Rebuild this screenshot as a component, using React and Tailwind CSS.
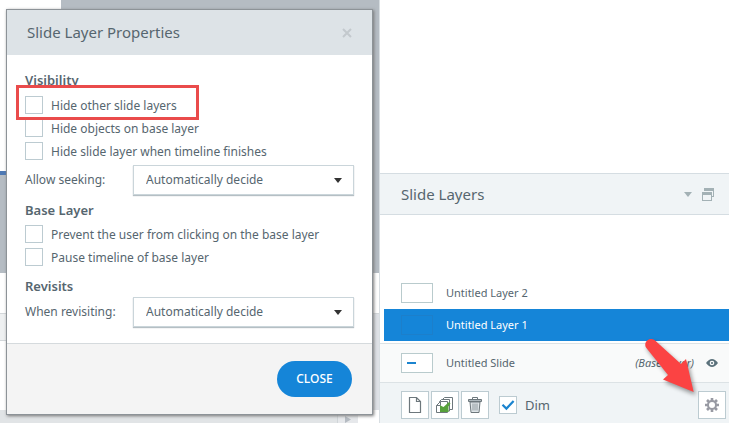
import React from "react";

const Checkbox = ({ id, label, checked = false }) => (
  <div className="flex h-[23px] items-center gap-2">
    <span className="relative flex">
      <input
        id={id}
        type="checkbox"
        defaultChecked={checked}
        className="peer h-[18px] w-[18px] appearance-none border border-[#bccbd1] bg-white"
      />
      <svg
        className="pointer-events-none absolute inset-0 hidden peer-checked:block"
        width="18"
        height="18"
        viewBox="0 0 18 18"
        fill="none"
        stroke="#1b84cf"
        strokeWidth="2.2"
        aria-hidden="true"
      >
        <path d="M3.5 8.8 7.4 12.6 14.6 5" />
      </svg>
    </span>
    <label htmlFor={id} className="pt-[2px]">
      {label}
    </label>
  </div>
);

const SelectRow = ({ id, label }) => (
  <div className="flex items-center">
    <label htmlFor={id} className="w-[108px] shrink-0">
      {label}
    </label>
    <div className="relative flex-1">
      <select
        id={id}
        className="h-[30px] w-full appearance-none border border-[#cad5da] bg-white px-3 shadow-[0_1px_1px_#b5bfc4]"
      >
        <option>Automatically decide</option>
        <option>Resume saved state</option>
        <option>Reset to initial state</option>
      </select>
      <svg
        className="pointer-events-none absolute top-[13px] right-3"
        width="8"
        height="5"
        viewBox="0 0 8 5"
        aria-hidden="true"
      >
        <path d="M0 0H8L4 5Z" fill="#333" />
      </svg>
    </div>
  </div>
);

const Heading = ({ children }) => (
  <h3 className="text-[13px] leading-5 font-semibold">{children}</h3>
);

const PropertiesDialog = () => (
  <div
    role="dialog"
    aria-labelledby="dialog-title"
    className="absolute top-[9px] right-[6px] left-[6px] border border-[#8d9398] bg-white shadow-[1px_1px_3px_#777]"
  >
    <header className="flex h-[45px] items-center justify-between bg-[#dde3e7] px-5">
      <h2 id="dialog-title" className="text-[15px]">
        Slide Layer Properties
      </h2>
      <button type="button" aria-label="Close dialog">
        <svg width="10" height="10" viewBox="0 0 10 10" stroke="#c3c9cd" strokeWidth="2">
          <path d="M1 1 9 9M9 1 1 9" />
        </svg>
      </button>
    </header>

    <div className="px-[18px] pt-[15px] pb-4">
      <Heading>Visibility</Heading>
      <div className="mt-[3px]">
        <Checkbox id="hide-layers" label="Hide other slide layers" />
        <Checkbox id="hide-objects" label="Hide objects on base layer" />
        <Checkbox id="hide-finished" label="Hide slide layer when timeline finishes" />
      </div>
      <div className="mt-[3px]">
        <SelectRow id="seeking" label="Allow seeking:" />
      </div>

      <div className="mt-[5px]">
        <Heading>Base Layer</Heading>
        <div className="mt-[2px]">
          <Checkbox id="prevent-click" label="Prevent the user from clicking on the base layer" />
          <Checkbox id="pause-timeline" label="Pause timeline of base layer" />
        </div>
      </div>

      <div className="mt-2">
        <Heading>Revisits</Heading>
        <div className="mt-[1px]">
          <SelectRow id="revisiting" label="When revisiting:" />
        </div>
      </div>
    </div>

    <footer className="flex justify-end border-t border-[#d5dadd] bg-[#f4f4f4] px-5 py-[17px]">
      <button
        type="button"
        className="h-9 w-[75px] rounded-full bg-[#1585d8] font-medium text-white"
      >
        CLOSE
      </button>
    </footer>

    {/* Callout around the first option */}
    <div className="pointer-events-none absolute top-[75px] left-[9px] h-[35px] w-[183px] border-3 border-[#ea4b4b]" />
  </div>
);

const Stage = () => (
  <div className="flex min-h-screen flex-col" aria-hidden="true">
    <div className="flex h-[273px]">
      <div className="flex w-[61px] flex-col">
        <div className="h-[171px] bg-white" />
        <div className="h-1 bg-[#4d79b5]" />
        <div className="flex-1 bg-[#b5bcc3]" />
      </div>
      <div className="flex-1 bg-[#b5bcc3]" />
    </div>
    <div className="h-10 bg-white" />
    <div className="flex h-[97px] border-t border-[#d3d7da]">
      <div className="flex flex-1 flex-col">
        <div className="h-[27px] border-b border-[#d3d7da] bg-[#eef0f1]" />
        <div className="flex-1 bg-white" />
      </div>
      <div className="w-[18px] bg-[#dee1e6]" />
    </div>
    <div className="flex flex-1">
      <div className="flex-1 border-r border-[#d0d5d8] bg-[#e1e4e6]" />
      <div className="flex w-5 justify-center bg-[#e6e8eb] pt-[6px]">
        <svg width="6" height="7" viewBox="0 0 6 7">
          <path d="M0 0 6 3.5 0 7Z" fill="#b5bbc2" />
        </svg>
      </div>
      <div className="w-[21px] bg-white" />
    </div>
  </div>
);

const LayerRow = ({ name, selected = false }) => (
  <li
    className={`ml-1 flex h-8 items-center gap-[13px] pl-[17px] ${
      selected ? "bg-[#1585d8] text-white" : ""
    }`}
  >
    <span
      className={`h-5 w-8 border ${
        selected ? "border-[#1c7fcb]" : "border-[#b9cbcd] bg-white"
      }`}
    />
    {name}
  </li>
);

const ToolButton = ({ label, children }) => (
  <button
    type="button"
    aria-label={label}
    className="flex h-7 w-7 items-center justify-center border border-[#bccbd1] bg-white"
  >
    {children}
  </button>
);

const LayersPanel = () => (
  <section className="relative flex min-h-screen flex-col border-l border-[#d8dee2] bg-white text-[11px]">
    <div className="h-[173px]" />
    <header className="flex h-[42px] items-center border-y border-[#d5dde2] bg-[#f0f4f6] pr-[15px] pl-[21px]">
      <h2 className="flex-1 text-[15px]">Slide Layers</h2>
      <button type="button" aria-label="Panel menu" className="mr-[10px]">
        <svg width="8" height="5" viewBox="0 0 8 5">
          <path d="M0 0H8L4 5Z" fill="#a3b1b5" />
        </svg>
      </button>
      <button type="button" aria-label="Float panel">
        <svg width="12" height="13" viewBox="0 0 12 13" fill="#a3b1b5">
          <path d="M2 0H12V9H10V8H11V3H2Z" />
          <path d="M0 4H10V13H0ZM1 7V12H9V7Z" fillRule="evenodd" />
        </svg>
      </button>
    </header>

    <div className="flex-1" />
    <ul>
      <LayerRow name="Untitled Layer 2" />
      <LayerRow name="Untitled Layer 1" selected />
    </ul>

    <div className="mt-[2px] flex h-[39px] items-center border-t border-[#dce2e5] bg-[#f9fafa] pr-[11px] pl-[21px]">
      <span className="mr-[13px] flex h-5 w-8 items-center border border-[#b9cbcd] bg-white pl-[5px]">
        <span className="h-[2px] w-[9px] bg-[#1b84cf]" />
      </span>
      <span className="flex-1">Untitled Slide</span>
      <em className="mr-3">(Base Layer)</em>
      <svg width="12" height="8" viewBox="0 0 12 8" aria-hidden="true">
        <path d="M0 4Q3 0 6 0T12 4Q9 8 6 8T0 4Z" fill="#5b717b" />
        <circle cx="6" cy="4" r="2.3" fill="#f9fafa" />
        <circle cx="6" cy="4" r="1.1" fill="#5b717b" />
      </svg>
    </div>

    <div className="flex h-[41px] items-center border-t border-[#dce2e5] bg-[#f0f4f6] pt-1 pr-[3px] pl-[21px]">
      <div className="flex flex-1 items-center gap-[2px]">
        <ToolButton label="New layer">
          <svg width="14" height="18" viewBox="0 0 14 18" fill="none" stroke="#6d777c" strokeWidth="1.2">
            <path d="M1.5 1.5H8.5L12.5 5.5V16.5H1.5ZM8.5 1.5V5.5H12.5" />
          </svg>
        </ToolButton>
        <ToolButton label="Duplicate layer">
          <svg width="18" height="17" viewBox="0 0 18 17" fill="#fff" stroke="#6d777c">
            <path d="M8.5 .5H16.5V12.5H6.5V2.5Z" />
            <path d="M5.5 2.5H13.5V14H3.5V4.5Z" />
            <path d="M4.5 4.5H11.5V15.5H.5V8.5ZM4.5 4.5V8.5H.5" />
            <path d="M4 8.2 7.5 10 13 5 14.5 6.5 12.5 9.5V15H4Z" fill="#57a13b" stroke="none" />
          </svg>
        </ToolButton>
        <ToolButton label="Delete layer">
          <svg width="14" height="16" viewBox="0 0 14 16" fill="none" stroke="#6d777c">
            <path d="M2 5 3 15.5H11L12 5Z" fill="#dfe5e8" />
            <path d="M4.5 2V.5H9.5V2" />
            <path d="M.5 2.5H13.5V4.5H.5Z" fill="#aeb8bd" />
            <path d="M5 6.5V13.5M7 6.5V13.5M9 6.5V13.5" stroke="#8f999e" />
          </svg>
        </ToolButton>
        <div className="ml-2 text-[13px]">
          <Checkbox id="dim" label="Dim" checked />
        </div>
      </div>
      <ToolButton label="Layer properties">
        <svg width="14" height="14" viewBox="0 0 14 14" fill="none" stroke="#989aa3">
          <circle cx="7" cy="7" r="4" strokeWidth="2" />
          <path
            d="M7 0V3M7 11V14M0 7H3M11 7H14M2 2 4 4M10 10 12 12M12 2 10 4M4 10 2 12"
            strokeWidth="2.6"
          />
        </svg>
      </ToolButton>
    </div>

    {/* Arrow pointing at the properties button */}
    <svg
      className="pointer-events-none absolute right-[29px] bottom-[23px] drop-shadow-[2px_3px_2px_#00000066]"
      width="60"
      height="65"
      viewBox="640 335 60 65"
      aria-hidden="true"
    >
      <path
        d="M646 347.5C643 342 649.5 336.5 654.5 340L681 364 686 359 693.7 392 663 379.5 668 375Z"
        fill="#fb4343"
      />
    </svg>
  </section>
);

export default function App() {
  return (
    <main className="grid min-h-screen grid-cols-[379px_1fr] bg-white font-['Noto_Sans',sans-serif] text-[12px] text-[#56666f]">
      <section className="relative">
        <Stage />
        <PropertiesDialog />
      </section>
      <LayersPanel />
    </main>
  );
}
